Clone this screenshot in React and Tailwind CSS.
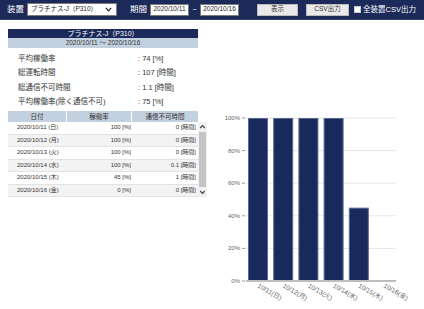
import React from "react";

const rows = [
  { date: "2020/10/11 (日)", rate: "100 [%]", down: "0 [時間]" },
  { date: "2020/10/12 (月)", rate: "100 [%]", down: "0 [時間]" },
  { date: "2020/10/13 (火)", rate: "100 [%]", down: "0 [時間]" },
  { date: "2020/10/14 (水)", rate: "100 [%]", down: "0.1 [時間]" },
  { date: "2020/10/15 (木)", rate: "45 [%]", down: "1 [時間]" },
  { date: "2020/10/16 (金)", rate: "0 [%]", down: "0 [時間]" },
];

const summary = [
  ["平均稼働率", ": 74 [%]"],
  ["総運転時間", ": 107 [時間]"],
  ["総通信不可時間", ": 1.1 [時間]"],
  ["平均稼働率(除く通信不可)", ": 75 [%]"],
];

const bars = [
  { label: "10/11(日)", v: 100 },
  { label: "10/12(月)", v: 100 },
  { label: "10/13(火)", v: 100 },
  { label: "10/14(水)", v: 100 },
  { label: "10/15(木)", v: 45 },
  { label: "10/16(金)", v: 0 },
];

const font = { fontFamily: '"Liberation Sans", "Noto Sans CJK JP", sans-serif' };

const Chart = () => {
  // svg origin is at page (208, 29)
  const ox = 208;
  const oy = 29;
  const top = 118;
  const base = 281;
  const ticks = [100, 80, 60, 40, 20, 0];
  return (
    <svg width="216" height="280" className="block shrink-0" style={font}>
      {ticks.map((t) => {
        const y = base - ((base - top) * t) / 100 - oy;
        return (
          <g key={t}>
            {t !== 0 && (
              <line x1={246 - ox} x2={396 - ox} y1={y} y2={y} stroke="#e6e6e6" strokeWidth="1" />
            )}
            <line x1={242 - ox} x2={245 - ox} y1={y} y2={y} stroke="#999" strokeWidth="1" />
            <text x={240 - ox} y={y + 2} fontSize="6" fill="#666" textAnchor="end">
              {t}%
            </text>
          </g>
        );
      })}
      {bars.map((b, i) => {
        const x = 248 + i * 25.2 - ox;
        const h = ((base - top) * b.v) / 100;
        return (
          <g key={b.label}>
            {b.v > 0 && (
              <rect
                x={x + 0.5}
                y={base - h - oy + 0.5}
                width="19"
                height={h - 0.5}
                fill="#172a5b"
                stroke="#5c6a92"
                strokeWidth="1"
              />
            )}
            <text
              x={x + 9}
              y={base + 6 - oy}
              fontSize="6.5"
              fill="#666"
              transform={`rotate(30 ${x + 9} ${base + 6 - oy})`}
            >
              {b.label}
            </text>
          </g>
        );
      })}
      <line x1={246 - ox} x2={396 - ox} y1={base - oy} y2={base - oy} stroke="#bdbdbd" strokeWidth="2" />
    </svg>
  );
};

const App = () => {
  return (
    <div className="w-[424px] h-[309px] bg-white overflow-hidden" style={font}>
      <div className="h-[20px] bg-[#1b2a5a] border-b border-[#33416b] flex items-center pl-[7px] text-white whitespace-nowrap">
        <span className="shrink-0 w-[17px] text-[8.5px] leading-none mr-[3px]">装置</span>
        <div className="shrink-0 w-[90px] h-[13px] bg-white border border-[#7a7a7a] flex items-center justify-between pl-[3px] pr-[4px] text-[#222]">
          <span className="text-[6.5px] leading-none">プラチナス-J（P310）</span>
          <svg width="7" height="5" viewBox="0 0 7 5">
            <path d="M0.8 0.8 L3.5 3.8 L6.2 0.8" fill="none" stroke="#222" strokeWidth="1.2" />
          </svg>
        </div>
        <span className="shrink-0 w-[17px] text-[8.5px] leading-none ml-[13px] mr-[3px]">期間</span>
        <div className="shrink-0 w-[39px] h-[12px] bg-white border border-[#7a7a7a] flex items-center justify-center text-[6.5px] text-[#222] leading-none">
          2020/10/11
        </div>
        <span className="shrink-0 w-[11px] text-center text-[7px] leading-none">~</span>
        <div className="shrink-0 w-[39px] h-[12px] bg-white border border-[#7a7a7a] flex items-center justify-center text-[6.5px] text-[#222] leading-none">
          2020/10/16
        </div>
        <button className="shrink-0 ml-[18px] w-[41px] h-[12px] bg-[#e9e9e9] border border-[#bbb] text-[6.5px] text-[#333] leading-none flex items-center justify-center">
          表示
        </button>
        <button className="shrink-0 ml-[8px] w-[43px] h-[12px] bg-[#e9e9e9] border border-[#bbb] text-[6.5px] text-[#333] leading-none flex items-center justify-center">
          CSV出力
        </button>
        <span className="shrink-0 ml-[5px] w-[7px] h-[7px] bg-white border border-[#ccc]" />
        <span className="shrink-0 ml-[2px] text-[7.5px] leading-none">全装置CSV出力</span>
      </div>

      <div className="flex pl-[8px] pt-[9px]">
        <div className="w-[200px] shrink-0 text-[#333]">
          <div className="w-[190px] h-[9px] bg-[#1b2a5a] text-white text-[7px] leading-[9px] text-center">
            プラチナス-J（P310）
          </div>
          <div className="w-[190px] h-[10px] bg-[#c3d0df] text-[6.5px] leading-[10px] text-center">
            2020/10/11 ～ 2020/10/16
          </div>
          <div className="w-[190px] pt-[3px] pb-[2px]">
            {summary.map(([k, v]) => (
              <div key={k} className="h-[14.5px] flex items-center text-[7.5px]">
                <span className="w-[130px] pl-[10px]">{k}</span>
                <span>{v}</span>
              </div>
            ))}
          </div>
          <div className="w-[190px] h-[11px] bg-[#c3d0df] flex text-[6.5px] leading-[11px]">
            <div className="w-[59px] text-center border-r border-white">日付</div>
            <div className="w-[65px] text-center border-r border-white">稼働率</div>
            <div className="flex-1 text-center">通信不可時間</div>
          </div>
          <div className="flex">
            <div className="w-[190px]">
              {rows.map((r, i) => (
                <div
                  key={r.date}
                  className={`h-[12.5px] flex items-center text-[6px] border-b border-[#e3e3e3] ${
                    i % 2 === 1 ? "bg-[#f3f3f3]" : "bg-white"
                  }`}
                >
                  <div className="w-[59px] pl-[9px]">{r.date}</div>
                  <div className="w-[65px] text-right pr-[1px]">{r.rate}</div>
                  <div className="flex-1 text-right pr-[2px]">{r.down}</div>
                </div>
              ))}
            </div>
            <div className="w-[9px] bg-[#f1f1f1] flex flex-col items-center">
              <svg width="7" height="10" viewBox="0 0 7 10">
                <path d="M1.2 6 L3.5 3.6 L5.8 6" fill="none" stroke="#444" strokeWidth="1.2" />
              </svg>
              <div className="w-[7px] flex-1 bg-[#c4c4c4]" />
              <svg width="7" height="10" viewBox="0 0 7 10">
                <path d="M1.2 4 L3.5 6.4 L5.8 4" fill="none" stroke="#444" strokeWidth="1.2" />
              </svg>
            </div>
          </div>
        </div>
        <Chart />
      </div>
    </div>
  );
};

export default App;
